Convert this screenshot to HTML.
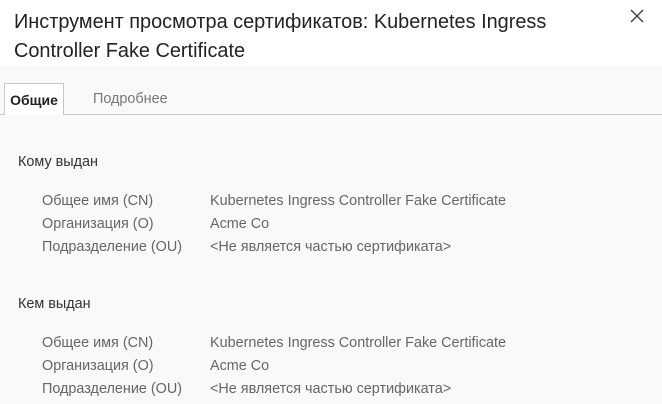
<!DOCTYPE html>
<html><head><meta charset="utf-8"><style>
body{margin:0;width:662px;height:404px;overflow:hidden;background:#f9f9f9;font-family:"Segoe UI","Liberation Sans","DejaVu Sans",sans-serif;position:relative}
.hdr{position:absolute;left:0;top:0;width:662px;height:65px;background:#fff}
.t{position:absolute;left:14px;font-size:19.9px;color:#222;white-space:nowrap;line-height:28px}
.x{position:absolute;left:627px;top:6px;width:20px;height:20px}
.tabline{position:absolute;left:0;top:114px;width:662px;height:1px;background:#c8c8c8}
.tab1{position:absolute;left:4px;top:83px;width:60px;height:32px;background:#fff;border:1px solid #c8c8c8;border-bottom:none;box-sizing:border-box;font-size:14px;font-weight:bold;color:#222;text-align:center;line-height:32px}
.tab2{position:absolute;left:93px;top:83px;font-size:14.4px;color:#777;line-height:32px}
.s{position:absolute;font-size:14.4px;line-height:20px;white-space:nowrap}
.h{left:18px;color:#333}
.l{left:42px;color:#666}
.v{left:210px;color:#666}
</style></head><body>
<div class="hdr"></div>
<div class="t" style="top:8px">Инструмент просмотра сертификатов: Kubernetes Ingress</div>
<div class="t" style="top:37px">Controller Fake Certificate</div>
<svg class="x" viewBox="0 0 20 20"><path d="M4 4L16 16M16 4L4 16" stroke="#444" stroke-width="1.5"/></svg>
<div class="tabline"></div>
<div class="tab1">Общие</div>
<div class="tab2">Подробнее</div>
<div class="s h" style="top:152px">Кому выдан</div>
<div class="s l" style="top:191px">Общее имя (CN)</div><div class="s v" style="top:191px">Kubernetes Ingress Controller Fake Certificate</div>
<div class="s l" style="top:214px">Организация (O)</div><div class="s v" style="top:214px">Acme Co</div>
<div class="s l" style="top:237px">Подразделение (OU)</div><div class="s v" style="top:237px">&lt;Не является частью сертификата&gt;</div>
<div class="s h" style="top:294px">Кем выдан</div>
<div class="s l" style="top:333px">Общее имя (CN)</div><div class="s v" style="top:333px">Kubernetes Ingress Controller Fake Certificate</div>
<div class="s l" style="top:356px">Организация (O)</div><div class="s v" style="top:356px">Acme Co</div>
<div class="s l" style="top:379px">Подразделение (OU)</div><div class="s v" style="top:379px">&lt;Не является частью сертификата&gt;</div>
</body></html>
